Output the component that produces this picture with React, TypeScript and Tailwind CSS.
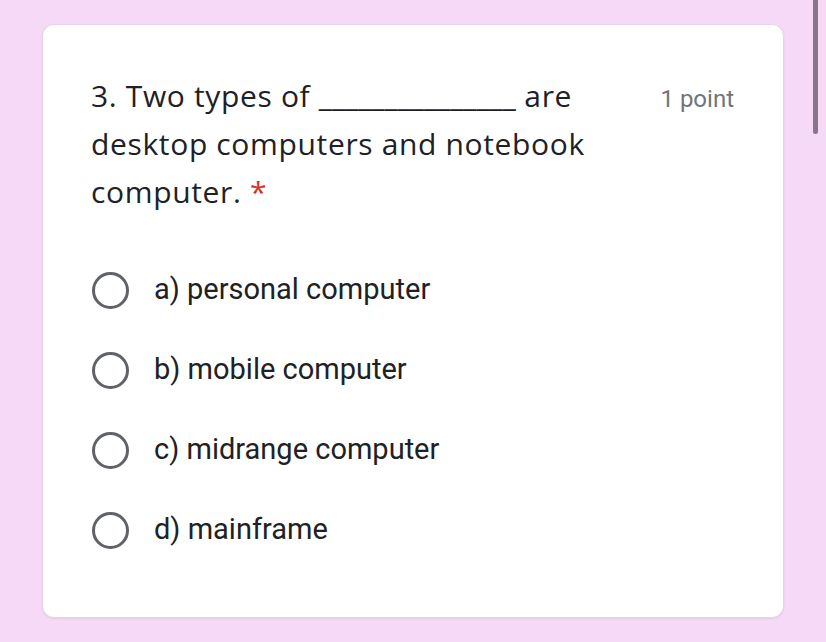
export default function App() {
  const options = ['a) personal computer', 'b) mobile computer', 'c) midrange computer', 'd) mainframe'];

  return (
    <div className="relative h-[642px] w-[826px] overflow-hidden bg-[#f6d9f6]">
      {/* scrollbar thumb */}
      <div className="absolute right-[8px] top-0 h-[134px] w-[5px] rounded-b-full bg-[#85768a]" />

      <div className="px-[42px] pt-[24px]">
        <div className="w-[742px] rounded-[12px] border border-[#e6d4e6] bg-white pl-[48px] pr-[49px] pt-[47px] pb-[47px] shadow-[0_1px_2px_rgba(0,0,0,0.08)]">
          <div className="flex items-start justify-between">
            <div
              className="text-[30px] leading-[48px] tracking-[0.65px] text-[#202124]"
              style={{ fontFamily: '"Open Sans", sans-serif' }}
            >
              3. Two types of <span className="tracking-normal">_______________</span> are
              <br />
              desktop computers and notebook
              <br />
              computer. <span className="text-[#d93025]">*</span>
            </div>
            <div
              className="pt-[11px] text-[24px] leading-[32px] text-[#70757a]"
              style={{ fontFamily: 'Roboto, sans-serif' }}
            >
              1 point
            </div>
          </div>

          <div className="mt-[34px] flex flex-col">
            {options.map((opt) => (
              <div key={opt} className="flex h-[80px] items-center">
                <div className="ml-[1px] h-[37px] w-[37px] rounded-full border-[3px] border-[#5f6368]" />
                <span
                  className="ml-[25px] text-[29px] text-[#202124]"
                  style={{ fontFamily: 'Roboto, sans-serif' }}
                >
                  {opt}
                </span>
              </div>
            ))}
          </div>
        </div>
      </div>
    </div>
  );
}
